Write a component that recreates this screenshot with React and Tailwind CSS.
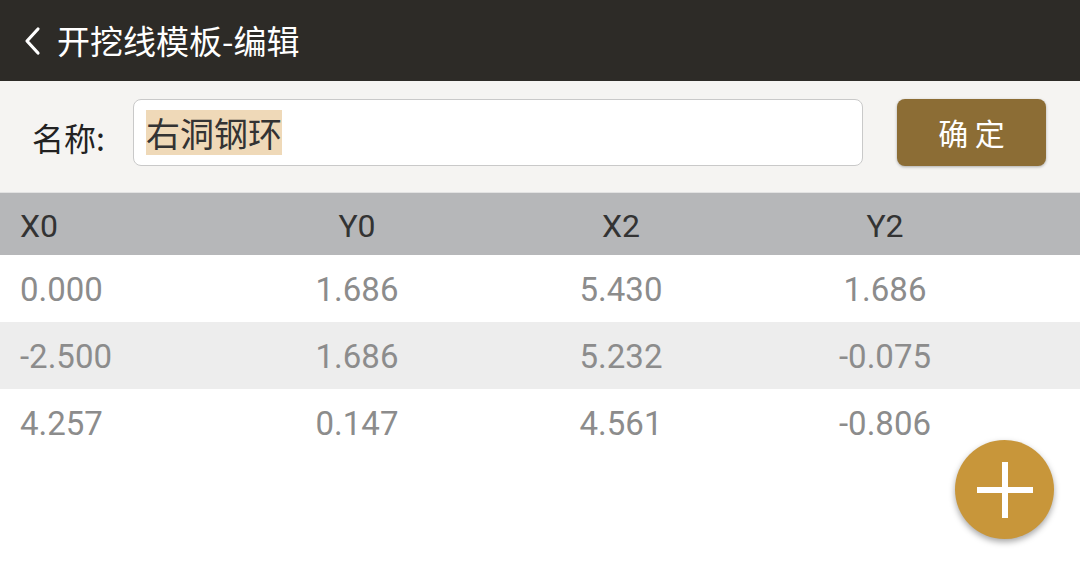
const rows = [
  ["0.000", "1.686", "5.430", "1.686"],
  ["-2.500", "1.686", "5.232", "-0.075"],
  ["4.257", "0.147", "4.561", "-0.806"],
];

const cols = "grid grid-cols-[225px_264px_264px_264px]";

export default function App() {
  return (
    <div className="relative w-[1080px] h-[566px] overflow-hidden bg-white font-['Roboto','Noto_Sans_CJK_SC',sans-serif]">
      <header className="h-[81px] bg-[#2d2b27] flex items-center pl-[24px]">
        <svg width="18" height="30" viewBox="0 0 18 30" className="mr-[15px]">
          <polyline points="14,3 3,15 14,27" fill="none" stroke="#fff" strokeWidth="3.2" strokeLinecap="round" strokeLinejoin="round" />
        </svg>
        <h1 className="text-white text-[33px] leading-none font-['Noto_Sans_CJK_SC',sans-serif]">开挖线模板-编辑</h1>
      </header>

      <div className="h-[112px] bg-[#f5f4f2] flex items-start pt-[18px] pl-[32px] border-b border-[#e2e2e2]">
        <span className="w-[101px] h-[67px] flex items-center pt-[8px] text-[32px] text-[#222] font-['Noto_Sans_CJK_SC',sans-serif]">名称:</span>
        <div className="w-[730px] h-[67px] bg-white border border-[#c9c9c9] rounded-[8px] flex items-center pl-[12px]">
          <span className="bg-[#efd9b8] text-[#333] text-[34px] leading-[45px] font-['Noto_Sans_CJK_SC',sans-serif]">右洞钢环</span>
        </div>
        <button className="ml-[34px] w-[149px] h-[67px] bg-[#8c6d35] rounded-[8px] shadow-[0_1px_3px_rgba(0,0,0,0.3)] text-white text-[30px] font-['Noto_Sans_CJK_SC',sans-serif]">
          确 定
        </button>
      </div>

      <div className={`${cols} h-[62px] pt-[3px] bg-[#b6b7b9] items-center text-[32px] text-[#333]`}>
        <div className="pl-[20px]">X0</div>
        <div className="text-center">Y0</div>
        <div className="text-center">X2</div>
        <div className="text-center">Y2</div>
      </div>

      {rows.map((r, i) => (
        <div
          key={i}
          className={`${cols} h-[67px] pt-[3px] items-center text-[33px] text-[#8c8c8c] ${i % 2 === 1 ? "bg-[#ededed]" : "bg-white"}`}
        >
          <div className="pl-[20px]">{r[0]}</div>
          <div className="text-center">{r[1]}</div>
          <div className="text-center">{r[2]}</div>
          <div className="text-center">{r[3]}</div>
        </div>
      ))}

      <button className="absolute left-[955px] top-[440px] w-[99px] h-[99px] rounded-full bg-[#c8963a] shadow-[0_3px_6px_rgba(0,0,0,0.35)] flex items-center justify-center">
        <svg width="56" height="56" viewBox="0 0 56 56">
          <rect x="25" y="0" width="6" height="56" fill="#fff" />
          <rect x="0" y="25" width="56" height="6" fill="#fff" />
        </svg>
      </button>
    </div>
  );
}
